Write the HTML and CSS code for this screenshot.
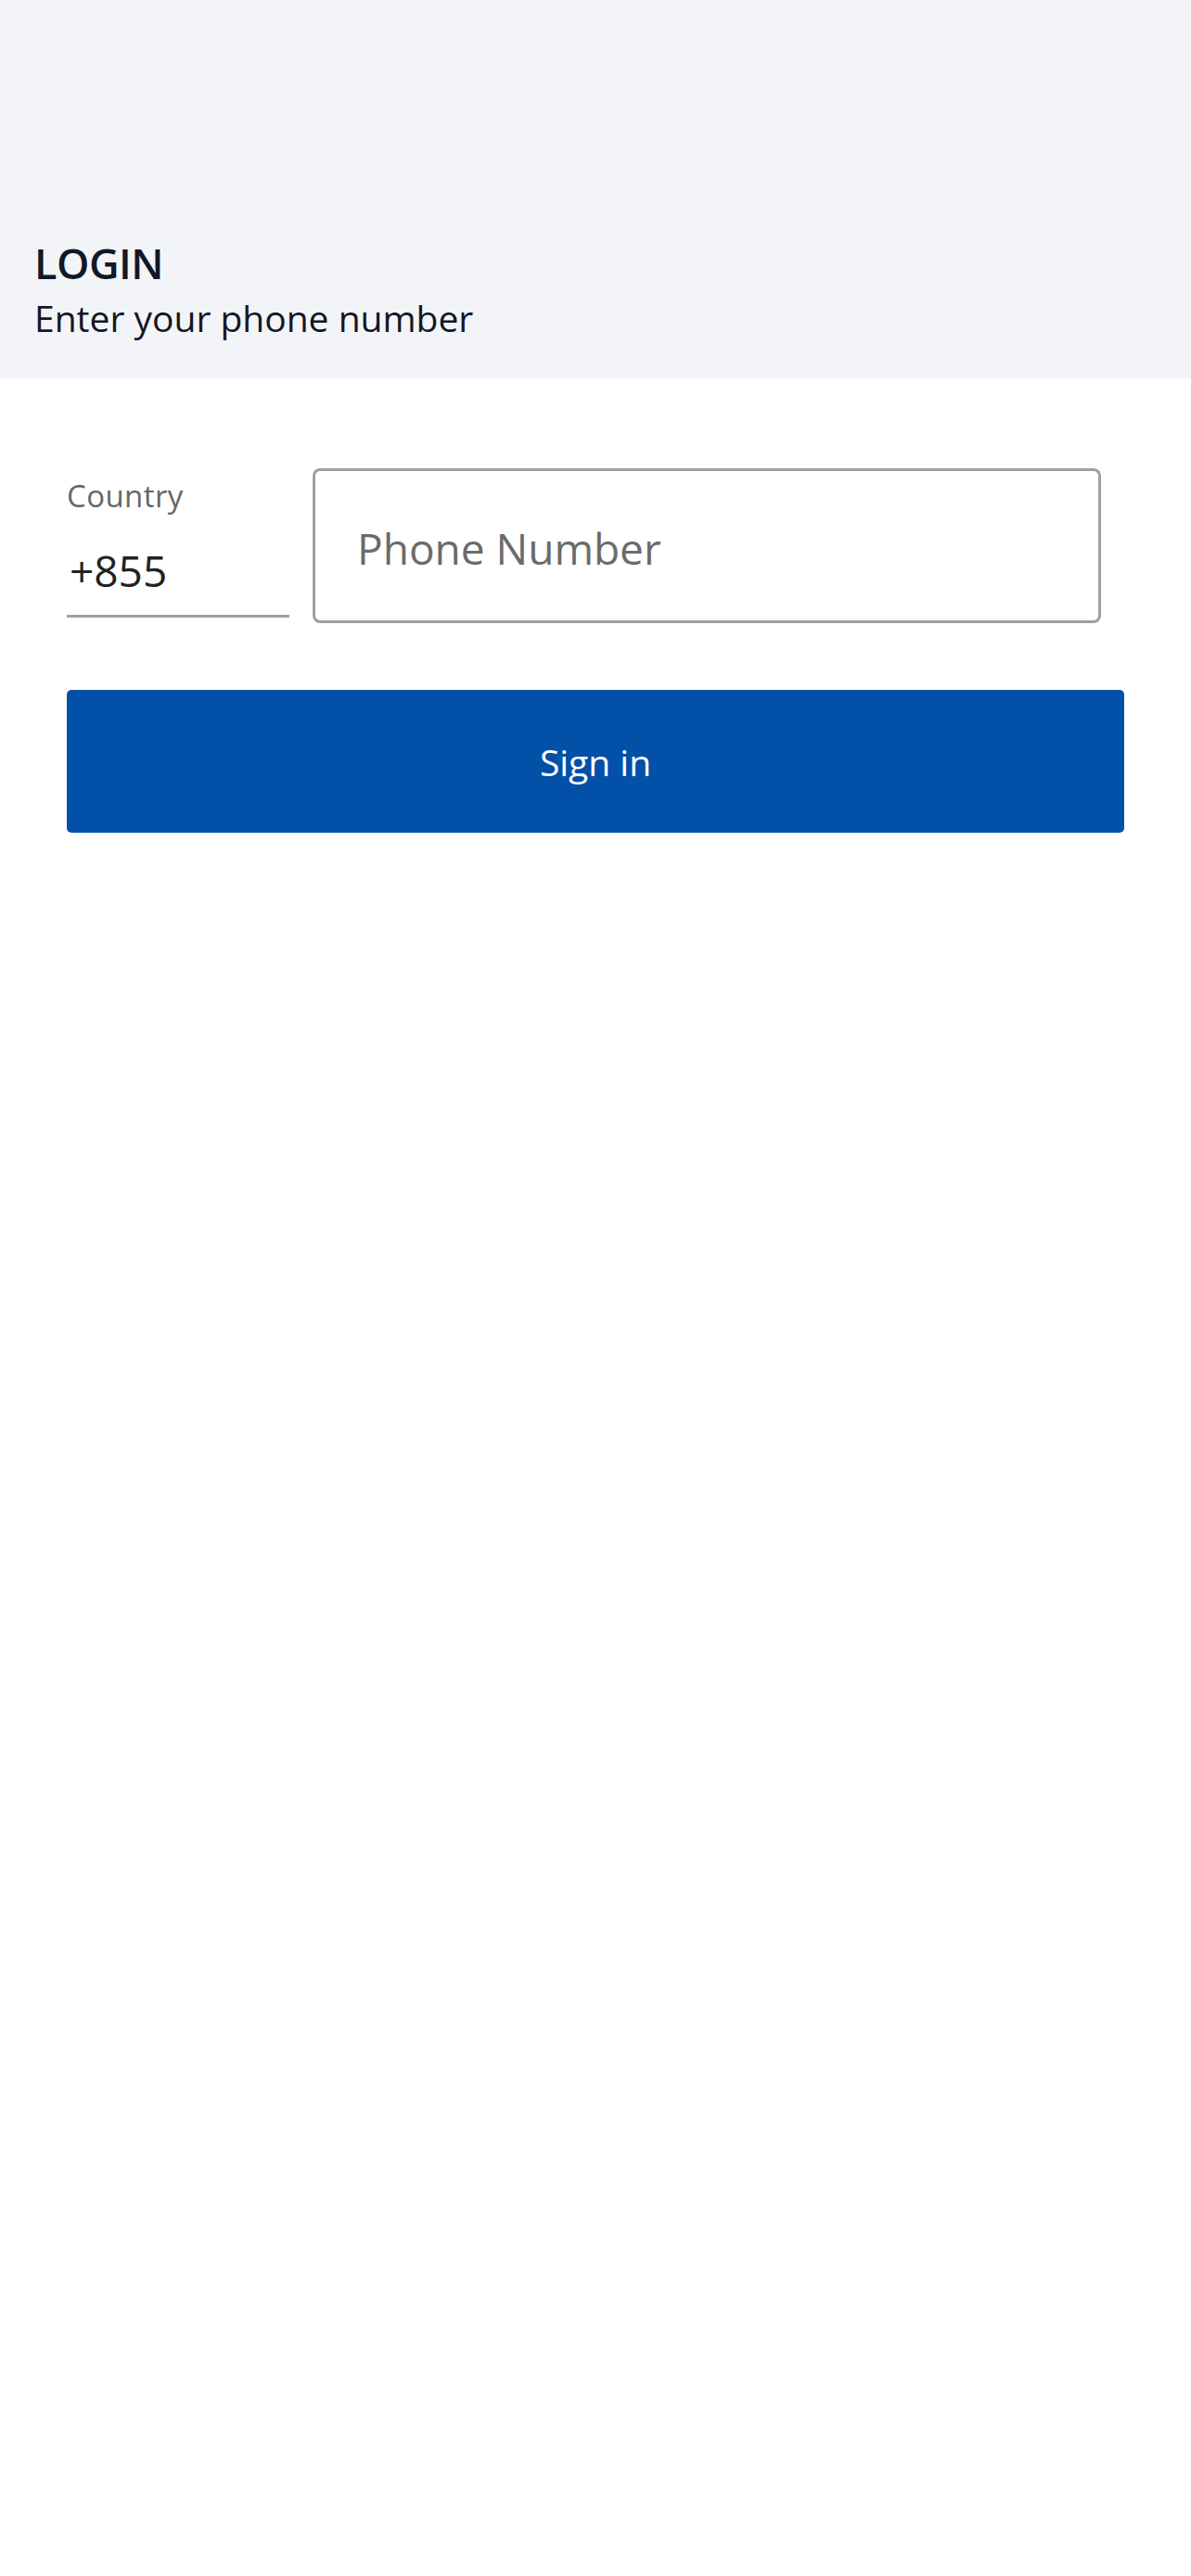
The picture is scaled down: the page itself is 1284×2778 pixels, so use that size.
FILE: index.html
```html
<!DOCTYPE html>
<html lang="en">
<head>
<meta charset="utf-8">
<title>Login</title>
<link rel="stylesheet" href="styles.css">
</head>
<body>
<header class="top">
  <h1 class="title">LOGIN</h1>
  <p class="subtitle">Enter your phone number</p>
</header>
<main class="content">
  <form class="login-form">
    <div class="phone-row">
      <div class="country-field">
        <label class="country-label" for="cc">Country</label>
        <input class="country-input" id="cc" type="text" value="+855">
      </div>
      <div class="phone-box">
        <input class="phone-input" type="tel" placeholder="Phone Number">
      </div>
    </div>
    <button class="sign-btn" type="button">Sign in</button>
  </form>
</main>
</body>
</html>
```

FILE: styles.css
```css
* { box-sizing: border-box; }
html, body { margin: 0; padding: 0; background: #ffffff; }
body {
  font-family: "Open Sans", "Noto Sans", sans-serif;
  color: #111827;
  width: 1284px;
  min-height: 2778px;
}
.top {
  height: 408px;
  background: #f3f4f8;
  display: flex;
  flex-direction: column;
  justify-content: flex-end;
  padding: 0 37px 39px;
}
.title {
  margin: 0 0 5px;
  font-size: 45px;
  line-height: 56px;
  font-weight: 600;
  letter-spacing: -0.5px;
  color: #111827;
}
.subtitle {
  margin: 0;
  font-size: 39px;
  line-height: 52px;
  font-weight: 400;
  color: #111827;
}
.content {
  padding: 97px 72px 0 72px;
}
.login-form {
  display: flex;
  flex-direction: column;
}
.phone-row {
  display: flex;
  align-items: flex-start;
  gap: 25px;
  margin-right: 25px;
}
.country-field {
  width: 240px;
  flex: none;
  display: flex;
  flex-direction: column;
  padding-top: 10px;
}
.country-label {
  font-size: 33px;
  line-height: 40px;
  letter-spacing: 0.4px;
  color: #666666;
}
.country-input {
  margin-top: 32px;
  border: 0;
  border-bottom: 3px solid #a0a0a0;
  padding: 0 0 20px 3px;
  font-family: inherit;
  font-size: 46px;
  line-height: 56px;
  height: 79px;
  color: #222222;
  background: transparent;
  outline: none;
  width: 100%;
}
.phone-box {
  flex: 1;
  height: 167px;
  border: 3px solid #a0a0a0;
  border-radius: 8px;
  display: flex;
}
.phone-input {
  flex: 1;
  border: 0;
  outline: none;
  background: transparent;
  padding: 4px 46px 0 45px;
  font-family: inherit;
  font-size: 46px;
  color: #1f1f1f;
  border-radius: 8px;
}
.phone-input::placeholder {
  color: #6b6b6b;
  opacity: 1;
}
.sign-btn {
  margin-top: 72px;
  height: 154px;
  border: 0;
  border-radius: 5px;
  background: #0250a8;
  color: #ffffff;
  font-family: inherit;
  font-size: 39px;
  font-weight: 400;
  cursor: pointer;
}
```
